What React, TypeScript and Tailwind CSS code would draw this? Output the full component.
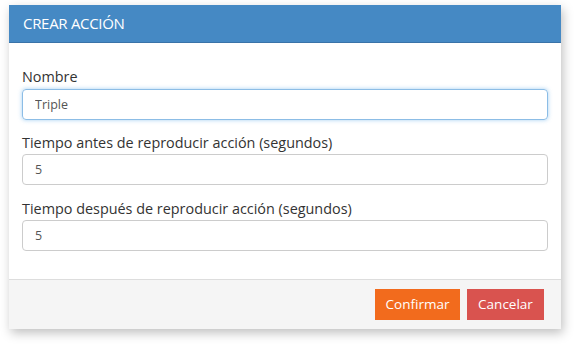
import { useState } from 'react'

export default function App() {
  const [nombre, setNombre] = useState('Triple')
  const [antes, setAntes] = useState('5')
  const [despues, setDespues] = useState('5')

  return (
    <div className="w-[577px] h-[350px] bg-white pt-[5px] pl-[9px]" style={{ fontFamily: '"Open Sans", sans-serif' }}>
      <div className="w-[552px] bg-white shadow-[2px_4px_10px_rgba(0,0,0,0.25)]">
        {/* Header */}
        <div className="h-[38px] bg-[#4589c4] border-b border-[#3a73a8] flex items-center px-[14px]">
          <h1 className="text-white text-[15px] tracking-[-0.3px]">CREAR ACCIÓN</h1>
        </div>

        {/* Body */}
        <div className="px-[13px] pt-[24px] pb-[28px]">
          <label className="block text-[14.4px] text-[#333] leading-[20px] mb-[2px]">Nombre</label>
          <input
            value={nombre}
            onChange={(e) => setNombre(e.target.value)}
            className="w-full h-[31px] px-[12px] text-[12.5px] text-[#555] border border-[#8cbde6] rounded-[4px] shadow-[0_0_4px_rgba(102,175,233,0.6)] outline-none"
          />

          <label className="block text-[14.4px] text-[#333] leading-[20px] mt-[13px] mb-[1px]">
            Tiempo antes de reproducir acción (segundos)
          </label>
          <input
            value={antes}
            onChange={(e) => setAntes(e.target.value)}
            className="w-full h-[31px] px-[12px] text-[12.5px] text-[#555] border border-[#ccc] rounded-[4px] outline-none"
          />

          <label className="block text-[14.4px] text-[#333] leading-[20px] mt-[14px] mb-[1px]">
            Tiempo después de reproducir acción (segundos)
          </label>
          <input
            value={despues}
            onChange={(e) => setDespues(e.target.value)}
            className="w-full h-[31px] px-[12px] text-[12.5px] text-[#555] border border-[#ccc] rounded-[4px] outline-none"
          />
        </div>

        {/* Footer */}
        <div className="h-[50px] bg-[#f5f5f5] border-t border-[#ddd] flex items-center justify-end gap-[7px] pr-[17px]">
          <button className="w-[85px] h-[31px] bg-[#f26b1d] text-white text-[13.5px]">Confirmar</button>
          <button className="w-[77px] h-[31px] bg-[#d9534f] text-white text-[13.5px]">Cancelar</button>
        </div>
      </div>
    </div>
  )
}
